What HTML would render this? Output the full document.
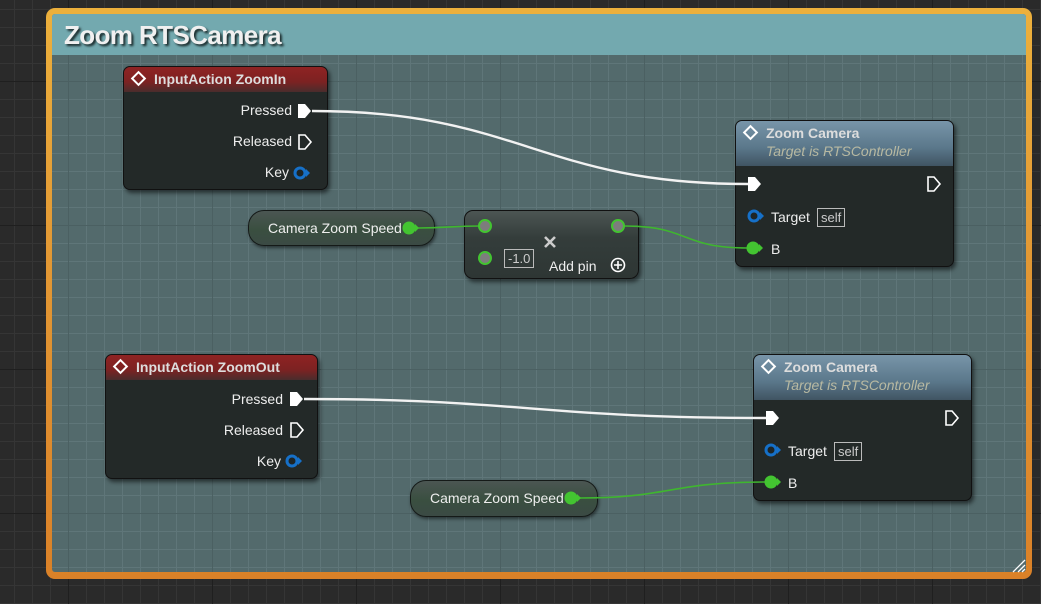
<!DOCTYPE html>
<html><head><meta charset="utf-8"><style>
*{margin:0;padding:0;box-sizing:border-box}
body{width:1041px;height:604px;overflow:hidden;position:relative;font-family:"Liberation Sans",sans-serif;
background-color:#2a2a2a;
background-image:
linear-gradient(90deg,#1f1f1f 1px,transparent 1px),
linear-gradient(0deg,#1f1f1f 1px,transparent 1px),
linear-gradient(90deg,#353535 1px,transparent 1px),
linear-gradient(0deg,#353535 1px,transparent 1px);
background-size:144px 144px,144px 144px,18px 18px,18px 18px;
background-position:68px 0,0 82px,14px 0,0 10px;}
.frame{position:absolute;left:46px;top:8px;width:986px;height:571px;border-radius:9px;
background:linear-gradient(180deg,#ecb03c,#e39a35 40%,#da8128);padding:6px 6px 7px 6px}
.inner{position:absolute;left:6px;top:6px;right:6px;bottom:7px;border-radius:3px;overflow:hidden;
background-color:#536a6c;
background-image:
linear-gradient(90deg,#4b6062 1px,transparent 1px),
linear-gradient(0deg,#4b6062 1px,transparent 1px),
linear-gradient(90deg,#5f7679 1px,transparent 1px),
linear-gradient(0deg,#5f7679 1px,transparent 1px);
background-size:144px 144px,144px 144px,18px 18px,18px 18px;
background-position:16px 0,0 68px,-38px 0,0 -4px;}
.title{position:absolute;left:0;top:0;right:0;height:41px;background:#73a9af;color:#f0f0f0;font-weight:bold;font-size:26px;padding:6px 0 0 12px;text-shadow:2px 2px 2px #1b2b2c;letter-spacing:-0.6px}
.node{position:absolute;background:#232928;border-radius:7px;box-shadow:2px 3px 4px rgba(0,0,0,.55);border:1px solid #111;color:#eee;font-size:14px}
.hdr{height:25px;border-radius:6px 6px 0 0;font-weight:bold;color:#ddd;font-size:14px;padding:4px 0 0 30px;position:relative}
.red{background:linear-gradient(180deg,#8f2323,#7c2222 60%,#4a2c2c)}
.blue{height:45px;background:linear-gradient(180deg,#7895a9,#5a778a 60%,#405462);padding-top:4px}
.sub{font-style:italic;font-weight:normal;color:#b8b9a2;font-size:14px;margin-top:2px}
.dia{position:absolute;left:9px;top:6px;width:11px;height:11px;border:2px solid #fff;transform:rotate(45deg)}
.t{position:absolute;white-space:nowrap}
.pill{position:absolute;border-radius:16px;background:linear-gradient(180deg,#4b5653,#3a4f40 55%,#3b4a44);border:1px solid #151a18;box-shadow:1px 2px 3px rgba(0,0,0,.5);color:#eee;font-size:14px}
.box{position:absolute;border:1px solid #bbb;color:#ccc;font-size:13px;padding:0 3px;line-height:17px}
</style></head><body>
<div class="frame"><div class="inner"><div class="title">Zoom RTSCamera</div></div></div>

<div class="node" style="left:123px;top:66px;width:205px;height:124px">
<div class="hdr red"><div class="dia"></div>InputAction ZoomIn</div>
<div class="t" style="right:35px;top:35px">Pressed</div>
<div class="t" style="right:35px;top:66px">Released</div>
<div class="t" style="right:38px;top:97px">Key</div>
</div>
<div class="node" style="left:105px;top:354px;width:213px;height:125px">
<div class="hdr red"><div class="dia"></div>InputAction ZoomOut</div>
<div class="t" style="right:34px;top:36px">Pressed</div>
<div class="t" style="right:34px;top:67px">Released</div>
<div class="t" style="right:36px;top:98px">Key</div>
</div>
<div class="node" style="left:735px;top:120px;width:219px;height:147px">
<div class="hdr blue"><div class="dia"></div>Zoom Camera<div class="sub">Target is RTSController</div></div>
<div class="t" style="left:35px;top:88px">Target</div>
<div class="box" style="left:81px;top:87px">self</div>
<div class="t" style="left:35px;top:120px">B</div>
</div>
<div class="node" style="left:753px;top:354px;width:219px;height:147px">
<div class="hdr blue"><div class="dia"></div>Zoom Camera<div class="sub">Target is RTSController</div></div>
<div class="t" style="left:34px;top:88px">Target</div>
<div class="box" style="left:80px;top:87px">self</div>
<div class="t" style="left:34px;top:120px">B</div>
</div>
<div class="pill" style="left:248px;top:210px;width:187px;height:36px"><div class="t" style="left:19px;top:9px">Camera Zoom Speed</div></div>
<div class="pill" style="left:410px;top:480px;width:188px;height:37px"><div class="t" style="left:19px;top:9px">Camera Zoom Speed</div></div>
<div class="node" style="left:464px;top:210px;width:175px;height:69px;background:linear-gradient(180deg,#4c5553,#343d3b 40%,#2e3634);border-radius:9px">
<div class="box" style="left:39px;top:38px">-1.0</div>
<div class="t" style="left:84px;top:47px">Add pin</div>
</div>

<svg width="1041" height="604" style="position:absolute;left:0;top:0">
<g fill="none" stroke-width="2.4" stroke="#f2f2f2">
<path d="M312 111 C520 111 540 184 748 184"/>
<path d="M304 399 C520 399 540 418 766 418"/>
</g>
<g fill="none" stroke-width="1.6" stroke="#3fb62f">
<path d="M418 228 C450 228 450 226 480 226"/>
<path d="M624 226 C690 226 680 248 748 248"/>
<path d="M580 498 C670 498 670 482 766 482"/>
</g>
<g fill="#fff">
<path d="M298 104 h7 l6 7 l-6 7 h-7z"/>
<path d="M290 392 h7 l6 7 l-6 7 h-7z"/>
<path d="M748 177 h7 l6 7 l-6 7 h-7z"/>
<path d="M766 411 h7 l6 7 l-6 7 h-7z"/>
</g>
<g fill="none" stroke="#fff" stroke-width="1.6">
<path d="M299 135 h6 l6 7 l-6 7 h-6z"/>
<path d="M291 423 h6 l6 7 l-6 7 h-6z"/>
<path d="M928 177 h6 l6 7 l-6 7 h-6z"/>
<path d="M946 411 h6 l6 7 l-6 7 h-6z"/>
</g>
<g fill="#1e2526" stroke="#1670c8" stroke-width="3">
<circle cx="300" cy="173" r="5"/><circle cx="292" cy="461" r="5"/>
<circle cx="754" cy="216" r="5"/><circle cx="771" cy="450" r="5"/>
</g>
<g fill="#1670c8"><path d="M306 169 l4 4 l-4 4z"/><path d="M298 457 l4 4 l-4 4z"/><path d="M760 212 l4 4 l-4 4z"/><path d="M777 446 l4 4 l-4 4z"/></g>
<g fill="#43c431">
<circle cx="409" cy="228" r="6.5"/><circle cx="571" cy="498" r="6.5"/>
<circle cx="753" cy="248" r="6.5"/><circle cx="771" cy="482" r="6.5"/>
<path d="M415 224 l4 4 l-4 4z"/><path d="M577 494 l4 4 l-4 4z"/><path d="M759 244 l4 4 l-4 4z"/><path d="M777 478 l4 4 l-4 4z"/>
</g>
<g fill="#7d7d7d" stroke="#43c431" stroke-width="2">
<circle cx="485" cy="226" r="6"/><circle cx="485" cy="258" r="6"/><circle cx="618" cy="226" r="6"/>
</g>
<g stroke="#ccc" stroke-width="2.6"><path d="M545 237 l10 10 M555 237 l-10 10"/></g>
<circle cx="618" cy="265" r="6.5" fill="none" stroke="#fff" stroke-width="1.6"/>
<path d="M614 265 h8 M618 261 v8" stroke="#fff" stroke-width="1.6"/>
<g stroke="#fff" stroke-width="1.3"><path d="M1013 572 l12 -12 M1018 572 l7 -7 M1022 572 l3 -3"/></g>
</svg>
</body></html>
